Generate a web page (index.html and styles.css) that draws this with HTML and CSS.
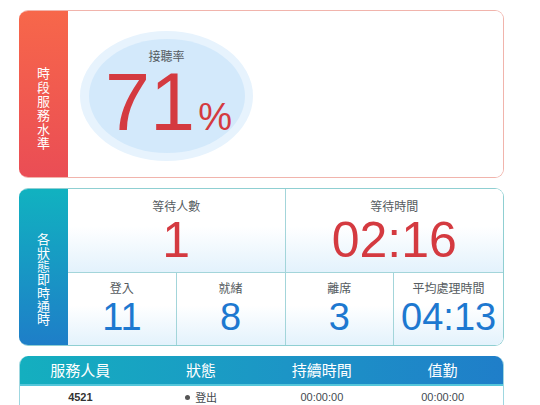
FILE: index.html
```html
<!DOCTYPE html>
<html lang="zh-Hant">
<head>
<meta charset="utf-8">
<link rel="stylesheet" href="styles.css">
</head>
<body>
<div class="page">
  <section class="panel panel-red">
    <div class="side side-red"><span class="side-text">時段服務水準</span></div>
    <div class="panel-body rate-body">
      <div class="ellipse-outer">
        <div class="ellipse-inner">
          <div class="rate-label">接聽率</div>
          <div class="rate-value"><span class="rate-num">71</span><span class="rate-pct">%</span></div>
        </div>
      </div>
    </div>
  </section>

  <section class="panel panel-teal">
    <div class="side side-teal"><span class="side-text">各狀態即時通時</span></div>
    <div class="panel-body stats">
      <div class="cell cell-big span2">
        <div class="cell-label">等待人數</div>
        <div class="num num-big red">1</div>
      </div>
      <div class="cell cell-big span2 last">
        <div class="cell-label">等待時間</div>
        <div class="num num-big red">02:16</div>
      </div>
      <div class="cell cell-small">
        <div class="cell-label">登入</div>
        <div class="num num-small blue">11</div>
      </div>
      <div class="cell cell-small">
        <div class="cell-label">就緒</div>
        <div class="num num-small blue">8</div>
      </div>
      <div class="cell cell-small">
        <div class="cell-label">離席</div>
        <div class="num num-small blue">3</div>
      </div>
      <div class="cell cell-small last">
        <div class="cell-label">平均處理時間</div>
        <div class="num num-small blue">04:13</div>
      </div>
    </div>
  </section>

  <section class="table-panel">
    <div class="thead">
      <div class="th">服務人員</div>
      <div class="th">狀態</div>
      <div class="th">持續時間</div>
      <div class="th">值勤</div>
    </div>
    <div class="trow">
      <div class="td td-id">4521</div>
      <div class="td"><span class="dot"></span>登出</div>
      <div class="td">00:00:00</div>
      <div class="td">00:00:00</div>
    </div>
  </section>
</div>
</body>
</html>
```

FILE: styles.css
```css
html, body {
  margin: 0;
  padding: 0;
  background: #ffffff;
}
body {
  font-family: "Liberation Sans", "Noto Sans CJK TC", sans-serif;
  width: 540px;
  height: 405px;
  overflow: hidden;
}
.page {
  padding: 10px 0 0 19px;
  width: 485px;
  display: flex;
  flex-direction: column;
}
.panel {
  display: flex;
  border-radius: 9px;
  overflow: hidden;
  box-sizing: border-box;
}
.panel-red {
  height: 168px;
  border: 1px solid #f1b4ac;
  border-left: none;
}
.panel-teal {
  margin-top: 10px;
  height: 158px;
  border: 1px solid #8fcfd2;
  border-left: none;
}
.side {
  width: 49px;
  flex: none;
  display: flex;
  align-items: center;
  justify-content: center;
  color: #ffffff;
  box-sizing: border-box;
}
.side-red {
  padding-top: 28px;
  background: linear-gradient(180deg, #f7674a 0%, #ea4d55 100%);
}
.side-teal {
  padding-top: 24px;
  background: linear-gradient(180deg, #11b2c0 0%, #1e7ec8 100%);
}
.side-text {
  display: block;
  width: 14px;
  word-break: break-all;
  text-align: center;
  font-family: "Noto Sans CJK TC", sans-serif;
  font-size: 13px;
}
.side-red .side-text {
  line-height: 14px;
}
.side-teal .side-text {
  line-height: 13.3px;
}
.panel-body {
  flex: 1;
  background: #ffffff;
}
.rate-body {
  padding: 20px 0 0 12px;
}
.ellipse-outer {
  width: 173px;
  height: 130px;
  border-radius: 50%;
  background: #e7f3fd;
  display: flex;
  align-items: center;
  justify-content: center;
}
.ellipse-inner {
  width: 156px;
  height: 114px;
  border-radius: 50%;
  background: #d3e9fb;
  display: flex;
  flex-direction: column;
  align-items: center;
}
.rate-label {
  margin-top: 10px;
  font-family: "Noto Sans CJK TC", sans-serif;
  font-size: 12px;
  line-height: 14px;
  color: #555b60;
}
.rate-value {
  margin-top: 7px;
  color: #d43a40;
  display: flex;
  align-items: baseline;
  padding-left: 4px;
  line-height: 64px;
  height: 64px;
}
.rate-num {
  font-size: 81px;
  line-height: 64px;
}
.rate-pct {
  font-size: 38px;
  line-height: 40px;
  margin-left: 3px;
}
.stats {
  display: grid;
  grid-template-columns: repeat(4, 1fr);
  grid-template-rows: 84px 1fr;
}
.cell {
  display: flex;
  flex-direction: column;
  align-items: center;
  border-right: 1px solid #a3d5da;
  background: linear-gradient(180deg, #ffffff 0%, #ffffff 45%, #e3f2fc 100%);
}
.cell.last {
  border-right: none;
}
.span2 {
  grid-column: span 2;
}
.cell-big {
  border-bottom: 1px solid #a3d5da;
}
.cell-label {
  font-family: "Noto Sans CJK TC", sans-serif;
  font-size: 12px;
  line-height: 14px;
  color: #555b60;
}
.cell-big .cell-label {
  margin-top: 10px;
}
.cell-small .cell-label {
  margin-top: 8px;
}
.num {
  font-family: "Liberation Sans", sans-serif;
}
.num-big {
  font-size: 50px;
  line-height: 40px;
  margin-top: 7px;
}
.num-small {
  font-size: 38px;
  line-height: 30px;
  margin-top: 7px;
}
.red {
  color: #d43a40;
}
.blue {
  color: #1d78d0;
}
.table-panel {
  margin-top: 10px;
  border-radius: 9px 9px 0 0;
  overflow: hidden;
  border: 1px solid #9fd7e0;
  border-top: none;
  border-bottom: none;
}
.thead {
  display: grid;
  grid-template-columns: repeat(4, 1fr);
  height: 28px;
  align-items: center;
  background: linear-gradient(90deg, #14afbf 0%, #1c95c6 55%, #1f7ec9 100%);
  border-bottom: 2px solid #55c6da;
}
.th {
  text-align: center;
  color: #ffffff;
  font-family: "Noto Sans CJK TC", sans-serif;
  font-size: 15px;
  line-height: 20px;
}
.trow {
  display: grid;
  grid-template-columns: repeat(4, 1fr);
  height: 22px;
  align-items: center;
}
.td {
  text-align: center;
  font-family: "Liberation Sans", "Noto Sans CJK TC", sans-serif;
  font-size: 11px;
  color: #444a50;
  display: flex;
  justify-content: center;
  align-items: center;
}
.td-id {
  font-weight: bold;
  color: #333;
}
.dot {
  width: 5px;
  height: 5px;
  border-radius: 50%;
  background: #555;
  margin-right: 5px;
}
```
